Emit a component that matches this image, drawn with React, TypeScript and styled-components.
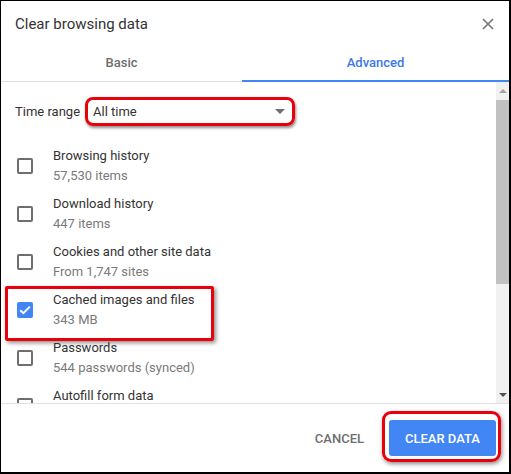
import React from "react";
import styled, { createGlobalStyle } from "styled-components";

const GlobalStyle = createGlobalStyle`
  html, body {
    margin: 0;
    padding: 0;
    background: #ffffff;
  }
  * {
    box-sizing: border-box;
  }
  body {
    font-family: Roboto, "Liberation Sans", Arial, sans-serif;
  }
`;

type ItemType = {
  title: string;
  sub: string;
  checked?: boolean;
  highlighted?: boolean;
};

const items: ItemType[] = [
  { title: "Browsing history", sub: "57,530 items" },
  { title: "Download history", sub: "447 items" },
  { title: "Cookies and other site data", sub: "From 1,747 sites" },
  { title: "Cached images and files", sub: "343 MB", checked: true, highlighted: true },
  { title: "Passwords", sub: "544 passwords (synced)" },
  { title: "Autofill form data", sub: "" },
];

const App = () => {
  return (
    <>
      <GlobalStyle />
      <Dialog>
        <Header>
          <Title>Clear browsing data</Title>
          <CloseButton aria-label="Close">
            <svg width="12" height="12" viewBox="0 0 12 12">
              <path d="M1 1 L11 11 M11 1 L1 11" stroke="#757575" strokeWidth="1.6" />
            </svg>
          </CloseButton>
        </Header>

        <Tabs>
          <Tab width={241}>Basic</Tab>
          <Tab active>Advanced</Tab>
        </Tabs>

        <Body>
          <Content>
            <TimeRow>
              <Label>Time range</Label>
              <Select>
                <span>All time</span>
                <Arrow />
              </Select>
            </TimeRow>

            <List>
              {items.map((item) => (
                <Row key={item.title} highlighted={item.highlighted}>
                  <Checkbox checked={item.checked}>
                    {item.checked && (
                      <svg width="12" height="10" viewBox="0 0 12 10">
                        <path d="M1.2 5.2 L4.4 8.2 L10.8 1.6" stroke="#fff" strokeWidth="2" fill="none" />
                      </svg>
                    )}
                  </Checkbox>
                  <Texts>
                    <ItemTitle>{item.title}</ItemTitle>
                    <ItemSub>{item.sub}</ItemSub>
                  </Texts>
                </Row>
              ))}
            </List>
          </Content>

          <Scrollbar>
            <ScrollArrow up />
            <Track>
              <Thumb />
            </Track>
            <ScrollArrow />
          </Scrollbar>
        </Body>

        <Footer>
          <CancelButton>CANCEL</CancelButton>
          <ClearButton>CLEAR DATA</ClearButton>
        </Footer>
      </Dialog>
    </>
  );
};

export default App;

const Dialog = styled.div`
  width: 511px;
  height: 474px;
  border: 1px solid #000;
  border-right-width: 2px;
  border-bottom-width: 2px;
  background: #fff;
  display: flex;
  flex-direction: column;
  overflow: hidden;
`;

const Header = styled.div`
  height: 43px;
  display: flex;
  align-items: center;
  justify-content: space-between;
  padding: 2px 14px 0 14px;
`;

const Title = styled.div`
  font-size: 15px;
  color: #333333;
`;

const CloseButton = styled.button`
  border: none;
  background: none;
  padding: 0;
  width: 14px;
  height: 14px;
  display: flex;
  align-items: center;
  justify-content: center;
`;

const Tabs = styled.div`
  height: 38px;
  display: flex;
  border-bottom: 1px solid #e0e0e0;
`;

const Tab = styled.div<{ active?: boolean; width?: number }>`
  ${(p) => (p.width ? `width: ${p.width}px;` : "flex: 1;")}
  display: flex;
  align-items: center;
  justify-content: center;
  font-size: 13px;
  font-weight: 500;
  color: ${(p) => (p.active ? "#3b78e7" : "#6e6e6e")};
  border-bottom: 2px solid ${(p) => (p.active ? "#4285f4" : "transparent")};
  margin-bottom: -1px;
  padding-top: 1px;
`;

const Body = styled.div`
  height: 322px;
  display: flex;
  border-bottom: 1px solid #e0e0e0;
`;

const Content = styled.div`
  flex: 1;
  overflow: hidden;
  padding-top: 15px;
`;

const TimeRow = styled.div`
  display: flex;
  align-items: center;
  height: 29px;
  padding-left: 14px;
`;

const Label = styled.div`
  font-size: 13px;
  color: #333333;
  width: 71px;
`;

const Select = styled.div`
  position: relative;
  width: 204px;
  height: 23px;
  margin-left: 2px;
  display: flex;
  align-items: center;
  justify-content: space-between;
  padding: 0 6px 0 5px;
  font-size: 13px;
  color: #333333;

  &::after {
    content: "";
    position: absolute;
    inset: -3px;
    border: 3px solid #e8000b;
    border-radius: 8px;
    box-shadow: 1px 2px 3px rgba(0, 0, 0, 0.45);
    pointer-events: none;
  }
`;

const Arrow = styled.span`
  width: 0;
  height: 0;
  border-left: 5px solid transparent;
  border-right: 5px solid transparent;
  border-top: 5px solid #6e6e6e;
  margin-right: 1px;
`;

const List = styled.div`
  margin-top: 16px;
`;

const Row = styled.div<{ highlighted?: boolean }>`
  position: relative;
  height: 48px;
  display: flex;
  align-items: center;
  padding-left: 16px;

  ${(p) =>
    p.highlighted &&
    `
    &::after {
      content: "";
      position: absolute;
      left: 4px;
      top: 0;
      width: 203px;
      height: 49px;
      border: 3px solid #e8000b;
      border-radius: 2px;
      box-shadow: 2px 2px 4px rgba(0, 0, 0, 0.45);
      pointer-events: none;
    }
  `}
`;

const Checkbox = styled.div<{ checked?: boolean }>`
  width: 16px;
  height: 16px;
  border-radius: 2px;
  border: ${(p) => (p.checked ? "none" : "2px solid #6e6e6e")};
  background: ${(p) => (p.checked ? "#4285f4" : "transparent")};
  display: flex;
  align-items: center;
  justify-content: center;
  flex-shrink: 0;
`;

const Texts = styled.div`
  margin-left: 20px;
  display: flex;
  flex-direction: column;
`;

const ItemTitle = styled.div`
  font-size: 13px;
  line-height: 20px;
  color: #333333;
`;

const ItemSub = styled.div`
  font-size: 13px;
  line-height: 20px;
  min-height: 20px;
  color: #7a7a7a;
`;

const Scrollbar = styled.div`
  width: 13px;
  display: flex;
  flex-direction: column;
  background: #f1f1f1;
`;

const ScrollArrow = styled.div<{ up?: boolean }>`
  height: 17px;
  display: flex;
  align-items: center;
  justify-content: center;

  &::before {
    content: "";
    width: 0;
    height: 0;
    border-left: 4px solid transparent;
    border-right: 4px solid transparent;
    ${(p) =>
      p.up
        ? "border-bottom: 4px solid #a3a3a3;"
        : "border-top: 4px solid #505050;"}
  }
`;

const Track = styled.div`
  flex: 1;
  padding-top: 1px;
`;

const Thumb = styled.div`
  height: 184px;
  background: #c1c1c1;
`;

const Footer = styled.div`
  flex: 1;
  display: flex;
  justify-content: flex-end;
  align-items: flex-start;
  padding: 16px 13px 0 0;
  gap: 9px;
`;

const CancelButton = styled.button`
  border: none;
  background: none;
  height: 36px;
  padding: 0 16px;
  font-family: inherit;
  font-size: 13px;
  font-weight: 500;
  color: #6e6e6e;
`;

const ClearButton = styled.button`
  position: relative;
  border: none;
  height: 36px;
  width: 107px;
  border-radius: 3px;
  background: #4285f4;
  font-family: inherit;
  font-size: 13px;
  font-weight: 500;
  color: #fff;

  &::after {
    content: "";
    position: absolute;
    top: -9px;
    left: -7px;
    right: -5px;
    bottom: -6px;
    border: 3px solid #e8000b;
    border-radius: 9px;
    box-shadow: 1px 2px 4px rgba(0, 0, 0, 0.45);
    pointer-events: none;
  }
`;
